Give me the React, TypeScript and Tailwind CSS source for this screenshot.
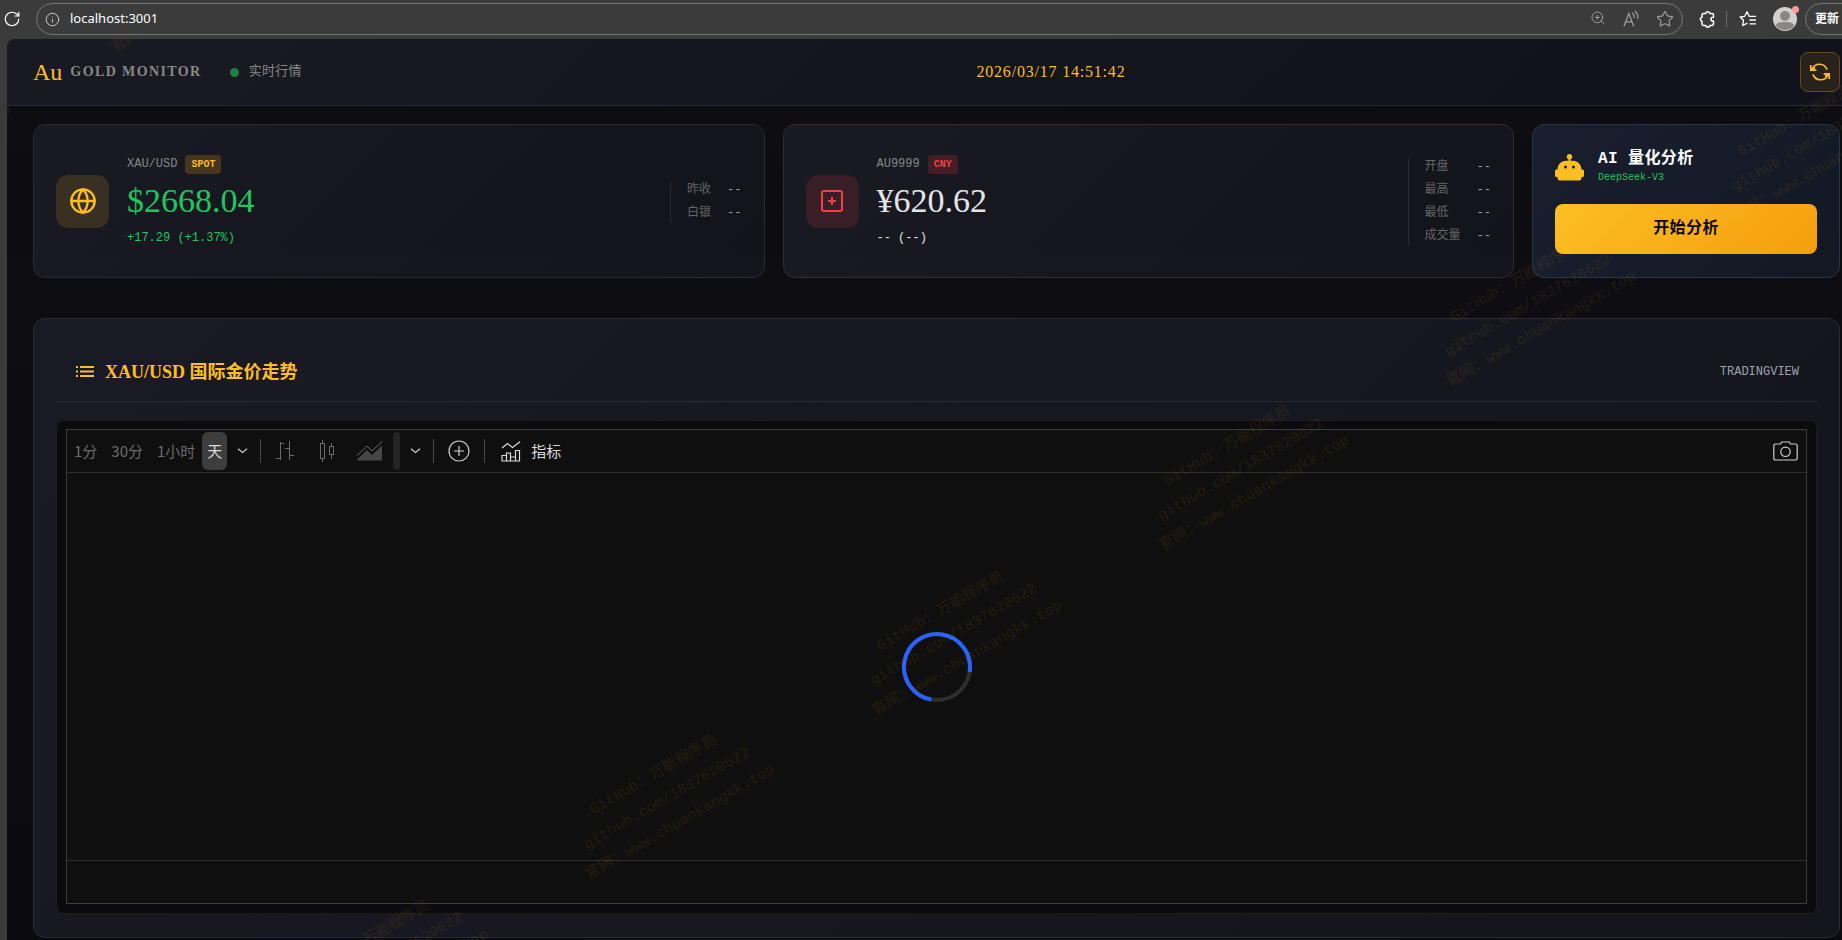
import { useState } from 'react';
import { Globe, Info, RotateCw, Star, ZoomIn } from 'lucide-react';

interface Stat {
  label: string;
  value: string;
}

interface PriceCardProps {
  symbol: string;
  badge: string;
  price: string;
  change: string;
  tone: 'gold' | 'red';
  priceClass: string;
  changeClass: string;
  stats: Stat[];
  icon: React.ReactNode;
}

const spotStats: Stat[] = [
  { label: '昨收', value: '--' },
  { label: '白银', value: '--' },
];

const cnyStats: Stat[] = [
  { label: '开盘', value: '--' },
  { label: '最高', value: '--' },
  { label: '最低', value: '--' },
  { label: '成交量', value: '--' },
];

const intervals = ['1分', '30分', '1小时', '天'];

// Centre points of the repeated watermark, relative to the page body
const watermarks = [
  { x: -104, y: 101 },
  { x: 186, y: -67 },
  { x: 373, y: 925 },
  { x: 660, y: 760 },
  { x: 947, y: 596 },
  { x: 1234, y: 431 },
  { x: 1521, y: 267 },
  { x: 1808, y: 102 },
];

function ReadAloudIcon() {
  return (
    <svg width="18" height="18" viewBox="0 0 18 18" fill="none" stroke="currentColor" strokeWidth="1.2" strokeLinecap="round">
      <path d="M2 16 6.8 3.5 11.6 16M3.7 11.8h6.2" />
      <path d="M10.5 3.2c1.3 1 1.9 2.6 1.7 4.3M13 1.2c2.3 1.8 3.2 4.4 2.8 7.3" />
    </svg>
  );
}

function ExtensionsIcon() {
  return (
    <svg width="17" height="18" viewBox="0 0 17 18" fill="none" stroke="currentColor" strokeWidth="1.5" strokeLinejoin="round">
      <path d="M4.500 3.500h2.200a2.100 2.100 0 0 1 4.100 0H13a1.500 1.500 0 0 1 1.500 1.500v2.300h-.6a1.900 1.900 0 0 0 0 3.800h.6V14a1.500 1.500 0 0 1-1.500 1.500h-2.200a2.100 2.100 0 0 1-4.100 0H4.500A1.500 1.500 0 0 1 3 14v-2.700a2.100 2.100 0 0 1 0-4.100V5a1.500 1.500 0 0 1 1.500-1.500Z" />
    </svg>
  );
}

function FavoritesIcon() {
  return (
    <svg width="18" height="18" viewBox="0 0 18 18" fill="none" stroke="currentColor" strokeWidth="1.3" strokeLinecap="round" strokeLinejoin="round">
      <path d="M10.2 6.2 8 1.8 5.7 6.3 1.2 7l3.2 3.3-.7 5.2 4.2-2.1" />
      <path d="M10.5 6.3h6M11 10h5.5M11 13.8h5.5" />
    </svg>
  );
}

function RefreshIcon() {
  return (
    <svg width="22" height="22" viewBox="0 0 22 22" fill="none" stroke="currentColor" strokeWidth="1.7">
      <path d="M18 8.6A8 8 0 0 0 3 8.3" />
      <path d="M4 13.4a8 8 0 0 0 15 .3" />
      <path d="M1.8 4v5.2h5.5M1.8 9.2 6 6.5M20.2 18v-5.2h-5.5M20.2 12.8 16 15.5" />
    </svg>
  );
}

function RobotIcon() {
  return (
    <svg width="29" height="27" viewBox="0 0 29 27" fill="#fbbf24">
      <circle cx="14.5" cy="2.7" r="2.7" />
      <rect x="13.5" y="4" width="2" height="4" />
      <path
        fillRule="evenodd"
        d="M11 6.7h7c4.8 0 8.3 3.8 8.5 8.8h1a1.5 1.5 0 0 1 1.5 1.5v4.5a1.5 1.5 0 0 1-1.5 1.5h-1v.7a2.8 2.8 0 0 1-2.8 2.8H5.3a2.8 2.8 0 0 1-2.8-2.8V23h-1A1.5 1.5 0 0 1 0 21.5V17a1.5 1.5 0 0 1 1.5-1.5h1c.2-5 3.7-8.800 8.500-8.800Zm-.5 4.900a1.500 1.500 0 1 0 0 3 1.500 1.500 0 0 0 0-3Zm8 0a1.500 1.500 0 1 0 0 3 1.500 1.500 0 0 0 0-3Z"
      />
    </svg>
  );
}

function ListIcon() {
  return (
    <svg width="18" height="11" viewBox="0 0 18 11" fill="#fbbf24">
      <path d="M0 0h2v2H0zM4 0h14v2H4zM0 4.500h2v2H0zM4 4.500h14v2H4zM0 9h2v2H0zM4 9h14v2H4z" />
    </svg>
  );
}

function BarsIcon() {
  return (
    <svg width="18" height="22" viewBox="0 0 18 22" fill="none" stroke="currentColor">
      <path d="M4.5 2v18M4.5 3.5H8M0 18.5h4.5M13.5 1v19M13.5 15.5H18M9 8.5h4.5" />
    </svg>
  );
}

function CandlesIcon() {
  return (
    <svg width="16" height="24" viewBox="0 0 16 24" fill="none" stroke="currentColor">
      <path d="M3.5 1v3M3.5 20v3M12.5 4v3M12.5 16v4" />
      <rect x="1.5" y="4.5" width="4" height="15" />
      <rect x="10.5" y="7.5" width="4" height="8" />
    </svg>
  );
}

function AreaIcon() {
  return (
    <svg width="27" height="20" viewBox="0 0 27 20" fill="none" stroke="currentColor">
      <path d="M1 14.5 11 5l5 5 10-9.5" />
      <path d="M1 19.5v-1L11 9l5 5L26 4.5v15z" fill="currentColor" fillOpacity="0.6" stroke="none" />
    </svg>
  );
}

function ChevronIcon() {
  return (
    <svg width="11" height="6" viewBox="0 0 11 6" fill="none" stroke="#cfcfcf" strokeWidth="1.2">
      <path d="m1 .8 4.5 3.7L10 .8" />
    </svg>
  );
}

function IndicatorsIcon() {
  return (
    <svg width="20" height="21" viewBox="0 0 20 21" fill="none" stroke="currentColor" strokeWidth="1.2">
      <path d="m1 7 5.5-4.5 5 4L19 .8" />
      <path d="M1 20v-5.5h4.5V20M5.5 20v-8h4v8M9.5 16h5v4M14.5 20V9.5h4V20H.5" />
    </svg>
  );
}

function CameraIcon() {
  return (
    <svg width="25" height="20" viewBox="0 0 25 20" fill="none" stroke="#cfcfcf" strokeWidth="1.2">
      <path d="M2.5 3h5l1.2-2h7.6l1.2 2h5a1.7 1.7 0 0 1 1.7 1.7v12.6a1.7 1.7 0 0 1-1.7 1.7h-20A1.7 1.7 0 0 1 .8 17.3V4.7A1.7 1.7 0 0 1 2.5 3Z" />
      <circle cx="12.5" cy="10.8" r="4.7" />
    </svg>
  );
}

function Separator() {
  return <span className="mx-[2px] h-6 w-px shrink-0 bg-[#4a4a4a]" />;
}

function BrowserBar() {
  return (
    <div className="flex h-[39px] items-center overflow-hidden pb-px font-['Noto_Sans','Noto_Sans_CJK_SC',sans-serif] text-[#a0a0a0]">
      <button aria-label="重新加载" className="flex w-9 shrink-0 pl-[3px] text-white">
        <RotateCw size={18} strokeWidth={1.6} />
      </button>
      <div className="flex h-8 min-w-0 flex-1 items-center rounded-full border border-[#757575] px-2">
        <Info size={15} strokeWidth={1.6} className="mr-2.5 shrink-0 text-[#c8c8c8]" />
        <input aria-label="地址" defaultValue="localhost:3001" className="min-w-0 flex-1 bg-transparent text-[13px] text-white outline-none" />
        <div className="flex shrink-0 gap-4">
          <ZoomIn size={16} strokeWidth={1.5} />
          <ReadAloudIcon />
          <Star size={18} strokeWidth={1.5} />
        </div>
      </div>
      <button aria-label="扩展" className="ml-4 shrink-0 text-white">
        <ExtensionsIcon />
      </button>
      <span className="mr-3 ml-2.5 h-4 w-px shrink-0 bg-[#686868]" />
      <button aria-label="收藏夹" className="shrink-0 text-white">
        <FavoritesIcon />
      </button>
      <span className="relative ml-4 shrink-0">
        <svg width="24" height="24" viewBox="0 0 24 24">
          <circle cx="12" cy="12" r="12" fill="#d2d0ce" />
          <circle cx="12" cy="9" r="5" fill="#8a8886" />
          <path d="M3 19c0-3 3-4 9-4s9 1 9 4a12 12 0 0 1-18 0Z" fill="#8a8886" />
        </svg>
        <span className="absolute -top-px -right-0.5 size-[7px] rounded-full bg-[#ff9a9a]" />
      </span>
      <button className="-mr-[30px] ml-2 h-8 shrink-0 rounded-full border border-[#757575] pr-8 pl-[9px] text-xs font-bold text-white">更新</button>
    </div>
  );
}

function PriceCard({ symbol, badge, price, change, tone, priceClass, changeClass, stats, icon }: PriceCardProps) {
  const red = tone === 'red';
  return (
    <section
      className={`flex items-center justify-between rounded-xl border bg-linear-135 from-[#1a1a24] to-[#14141c] px-[22px] ${
        red ? 'border-[#3a2a2e]' : 'border-[#2a2a38]'
      }`}
    >
      <div className="flex items-center gap-[18px]">
        <div
          className={`flex size-[53px] items-center justify-center rounded-xl ${
            red ? 'bg-[#3b1f28] text-[#ef4444]' : 'bg-[#3b3024] text-[#fbbf24]'
          }`}
        >
          {icon}
        </div>
        <div className="flex flex-col gap-[7px]">
          <div className="flex h-[19px] items-center gap-2">
            <span className="text-xs text-[#888888]">{symbol}</span>
            <span
              className={`rounded px-1.5 text-[10px] leading-[19px] font-bold ${
                red ? 'bg-[#451f28] text-[#ef4444]' : 'bg-[#473722] text-[#fbbf24]'
              }`}
            >
              {badge}
            </span>
          </div>
          <div className={`font-['Liberation_Serif',serif] text-[34px] leading-10 ${priceClass}`}>{price}</div>
          <div className={`text-xs leading-5 ${changeClass}`}>{change}</div>
        </div>
      </div>
      <dl className="flex flex-col gap-[5px] border-l border-[#2a2a38] pl-4 text-xs leading-[18px]">
        {stats.map((s) => (
          <div key={s.label} className="flex justify-between gap-4">
            <dt className="text-[#666666]">{s.label}</dt>
            <dd className="text-[#a0a0a0]">{s.value}</dd>
          </div>
        ))}
      </dl>
    </section>
  );
}

function ChartToolbar() {
  const [active, setActive] = useState('天');

  return (
    <div className="flex h-[43px] items-center border-b border-[#2e2e2e] font-['Noto_Sans_CJK_SC',sans-serif] text-[15px] text-[#6b6b6b]">
      {intervals.map((item) => (
        <button
          key={item}
          onClick={() => setActive(item)}
          className={item === active ? 'h-[38px] rounded-md bg-[#3d3d3d] px-[5px] text-[#dbdbdb]' : 'h-[38px] px-[7px]'}
        >
          {item}
        </button>
      ))}
      <button aria-label="更多周期" className="flex w-[31px] justify-center">
        <ChevronIcon />
      </button>
      <Separator />
      <div className="flex pr-[3px] pl-px">
        <button aria-label="美国线" className="flex w-[42px] items-center justify-center">
          <BarsIcon />
        </button>
        <button aria-label="K线图" className="flex w-[42px] items-center justify-center">
          <CandlesIcon />
        </button>
        <button aria-label="面积图" className="flex w-[42px] items-center justify-center">
          <AreaIcon />
        </button>
      </div>
      <span className="h-[38px] w-[7px] rounded bg-[#242424]" />
      <button aria-label="更多图表类型" className="flex w-[31px] justify-center">
        <ChevronIcon />
      </button>
      <Separator />
      <button aria-label="对比" className="flex w-[46px] justify-center">
        <svg width="22" height="22" viewBox="0 0 22 22" fill="none" stroke="#cfcfcf" strokeWidth="1.2">
          <circle cx="11" cy="11" r="10" />
          <path d="M11 6v10M6 11h10" />
        </svg>
      </button>
      <Separator />
      <button className="flex items-center gap-2.5 pl-[14px] text-[#dbdbdb]">
        <IndicatorsIcon />
        指标
      </button>
      <button aria-label="截图" className="mr-2 ml-auto">
        <CameraIcon />
      </button>
    </div>
  );
}

function Watermark() {
  return (
    <div aria-hidden="true" className="pointer-events-none absolute inset-0 overflow-hidden text-[15px] leading-[27px] text-[#fbbf24] opacity-8">
      {watermarks.map((w) => (
        <div
          key={w.x}
          className="absolute -translate-x-1/2 -translate-y-1/2 -rotate-30 text-center whitespace-nowrap"
          style={{ left: w.x, top: w.y }}
        >
          GitHub：万能程序员
          <br />
          github.com/1837620622
          <br />
          官网：www.chuankangkk.top
        </div>
      ))}
    </div>
  );
}

export default function App() {
  return (
    <div className="flex min-h-screen flex-col bg-[#3b3b3b]">
      <BrowserBar />
      <div className="relative ml-[7px] flex-1 overflow-hidden rounded-tl-lg bg-linear-to-b from-[#0e0e13] to-[#0a0a0f] font-['Liberation_Mono','Noto_Sans_CJK_SC',monospace] text-[#e5e5e5]">
        <header className="flex items-center justify-between border-b border-[#2a2a38] bg-linear-135 from-[#1a1a24] to-[#12121a] py-[13px] pr-[2px] pl-[26px]">
          <div className="flex items-center">
            <span className="font-['Liberation_Serif',serif] text-2xl text-[#fbbf24]">Au</span>
            <h1 className="ml-2 font-['Liberation_Serif',serif] text-sm font-bold tracking-widest text-[#888888]">GOLD MONITOR</h1>
            <span className="ml-7 size-[9px] rounded-full bg-[#1f8044]" />
            <span className="ml-2.5 text-[13px] tracking-wide text-[#888888]">实时行情</span>
          </div>
          <time className="font-['Liberation_Serif',serif] text-base tracking-wider text-[#fbbf24]">2026/03/17 14:51:42</time>
          <button
            aria-label="刷新"
            className="flex size-10 items-center justify-center rounded-lg border border-[#66491f] bg-[#2a221d] text-[#fbbf24]"
          >
            <RefreshIcon />
          </button>
        </header>

        <main className="flex flex-col gap-10 pt-[18px] pr-[2px] pb-px pl-[26px]">
          <div className="grid grid-cols-[1fr_1fr_308px] gap-[18px]">
            <PriceCard
              symbol="XAU/USD"
              badge="SPOT"
              price="$2668.04"
              change="+17.29 (+1.37%)"
              tone="gold"
              priceClass="text-[#22c55e]"
              changeClass="text-[#22c55e]"
              stats={spotStats}
              icon={<Globe size={28} strokeWidth={2} />}
            />
            <PriceCard
              symbol="AU9999"
              badge="CNY"
              price="¥620.62"
              change="-- (--)"
              tone="red"
              priceClass="text-[#e5e5e5]"
              changeClass="text-[#e5e5e5]"
              stats={cnyStats}
              icon={
                <svg width="24" height="24" viewBox="0 0 24 24" fill="none" stroke="currentColor" strokeWidth="2">
                  <rect x="2" y="2" width="20" height="20" rx="2" />
                  <path d="M12 8v8M8 12h8" />
                </svg>
              }
            />
            <section className="flex flex-col gap-[18px] rounded-xl border border-[#26374a] bg-linear-135 from-[#1a2030] to-[#131823] px-[22px] py-[23px]">
              <div className="flex items-center gap-[14px]">
                <RobotIcon />
                <div>
                  <h2 className="text-base leading-[22px] font-bold tracking-wide text-white">AI 量化分析</h2>
                  <p className="text-[10px] leading-4 text-[#22c55e]">DeepSeek-V3</p>
                </div>
              </div>
              <button className="h-[50px] rounded-lg bg-linear-135 from-[#fbbf24] to-[#f59e0b] text-base font-bold tracking-wide text-[#0a0a0f]">
                开始分析
              </button>
            </section>
          </div>

          <section className="rounded-xl border border-[#2a2a38] bg-linear-135 from-[#1a1a24] to-[#14141c] px-[22px] py-[23px]">
            <div className="mb-[18px] flex h-[60px] items-center justify-between border-b border-[#2a2a38] pr-[18px] pl-5">
              <h2 className="flex items-center gap-[11px] font-['Liberation_Serif','Noto_Sans_CJK_SC',serif] text-lg font-bold text-[#fbbf24]">
                <ListIcon />
                XAU/USD 国际金价走势
              </h2>
              <span className="text-xs text-[#9ca3af]">TRADINGVIEW</span>
            </div>
            <div className="rounded-lg border border-[#231b16] bg-[#0a0a0f] p-[9px] pt-2">
              <div className="border border-[#3d3d3d] bg-[#0f0f0f]">
                <ChartToolbar />
                <div className="flex h-[388px] items-center justify-center border-b border-[#2e2e2e]">
                  <svg width="72" height="72" viewBox="0 0 72 72" fill="none" strokeWidth="4">
                    <circle cx="36" cy="36" r="33" stroke="#2e2e2e" />
                    <path d="M30.3 68.5A33 33 0 1 1 68.6 41" stroke="#2962ff" />
                  </svg>
                </div>
                <div className="h-[42px]" />
              </div>
            </div>
          </section>
        </main>
        <Watermark />
      </div>
    </div>
  );
}
